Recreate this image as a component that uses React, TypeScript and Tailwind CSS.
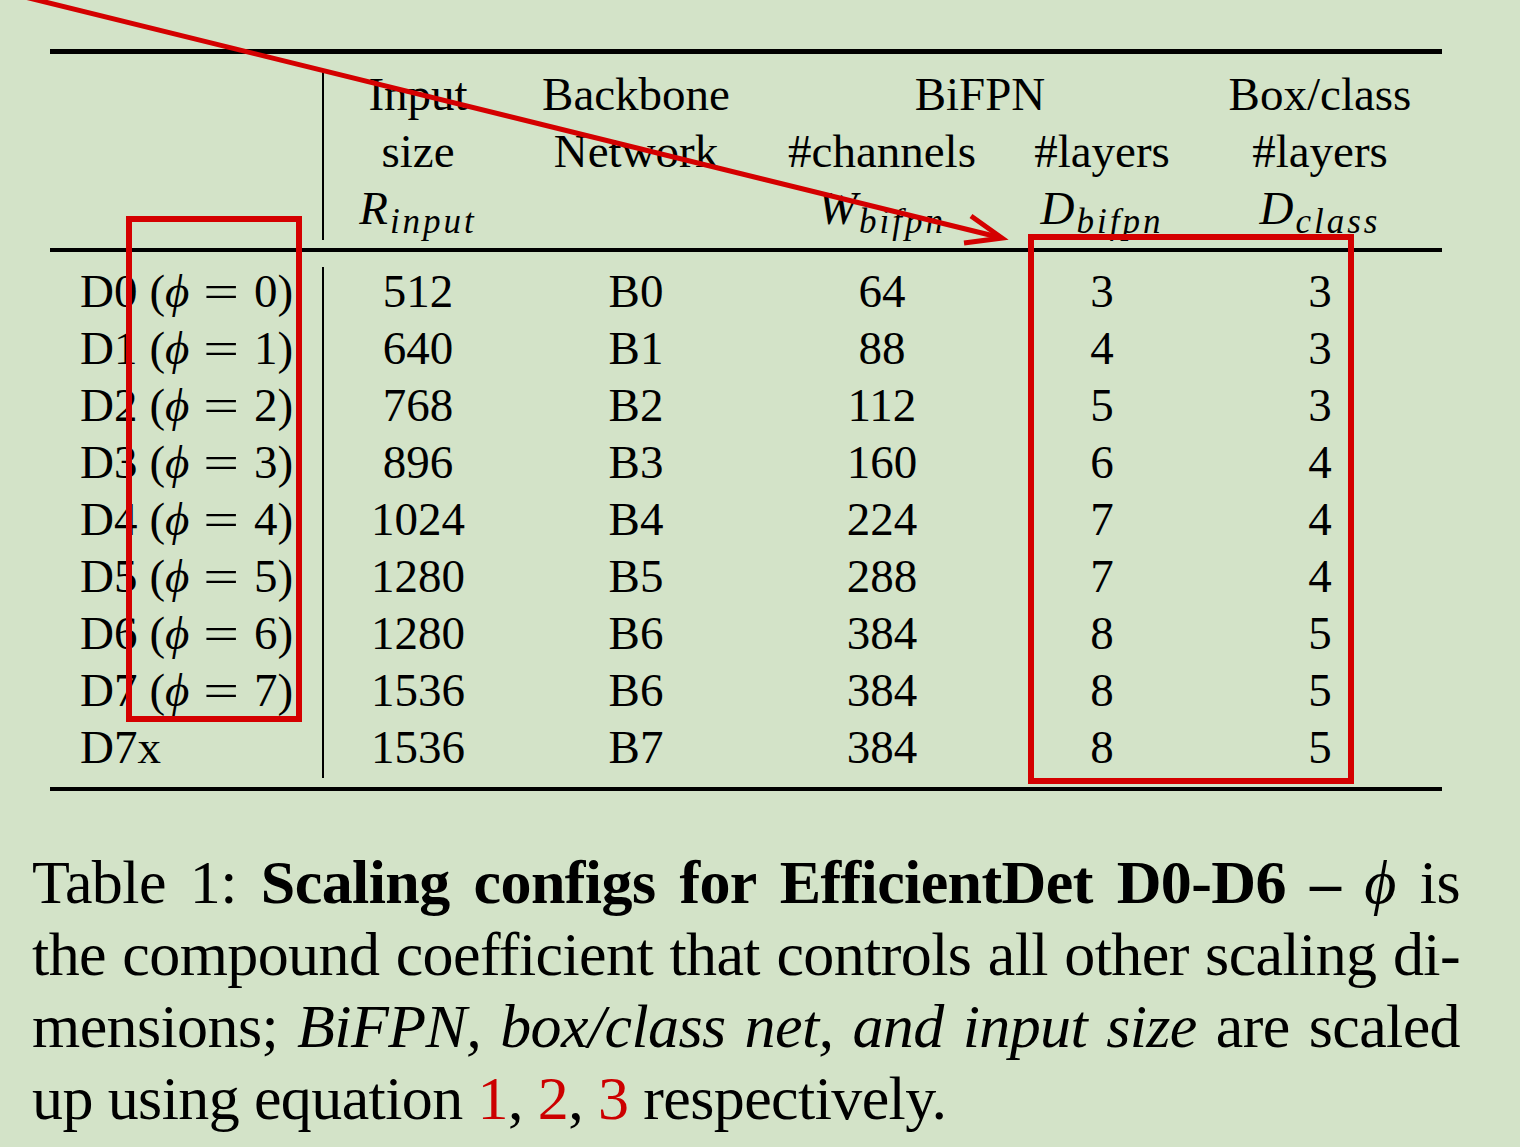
const rows = [
  { label: 'D0', phi: '0', input: '512', backbone: 'B0', ch: '64', layers: '3', box: '3' },
  { label: 'D1', phi: '1', input: '640', backbone: 'B1', ch: '88', layers: '4', box: '3' },
  { label: 'D2', phi: '2', input: '768', backbone: 'B2', ch: '112', layers: '5', box: '3' },
  { label: 'D3', phi: '3', input: '896', backbone: 'B3', ch: '160', layers: '6', box: '4' },
  { label: 'D4', phi: '4', input: '1024', backbone: 'B4', ch: '224', layers: '7', box: '4' },
  { label: 'D5', phi: '5', input: '1280', backbone: 'B5', ch: '288', layers: '7', box: '4' },
  { label: 'D6', phi: '6', input: '1280', backbone: 'B6', ch: '384', layers: '8', box: '5' },
  { label: 'D7', phi: '7', input: '1536', backbone: 'B6', ch: '384', layers: '8', box: '5' },
  { label: 'D7x', phi: '', input: '1536', backbone: 'B7', ch: '384', layers: '8', box: '5' },
]

// math symbol with a subscript, e.g. R_input
function Sym({ main, sub }: { main: string; sub: string }) {
  return (
    <span className="italic">
      {main}
      <span className="relative top-[9px] ml-[2px] text-[35px] leading-none tracking-[3px]">{sub}</span>
    </span>
  )
}

function RowLabel({ label, phi }: { label: string; phi: string }) {
  return (
    <div className="flex items-baseline whitespace-pre">
      <span>{label}</span>
      {phi && (
        <>
          <span className="ml-[12px]">(</span>
          <span className="italic">ϕ</span>
          <span className="mx-[19px] inline-block scale-x-[1.35]">=</span>
          <span>{phi})</span>
        </>
      )}
    </div>
  )
}

export default function App() {
  return (
    <div className="relative min-h-[1147px] w-[1520px] overflow-hidden bg-[#d3e3c8] font-[family-name:'Liberation_Serif','Times_New_Roman',serif] text-black">
      {/* Table */}
      <div className="pt-[49px] pl-[50px]">
        <div className="w-[1392px]">
          <div className="h-[5px] bg-black" />

          {/* Header */}
          <div className="flex pt-[12px] pb-[11px] text-[47px] leading-[57px]">
            <div className="w-[272px] shrink-0" />
            <div className="w-[2px] shrink-0 bg-black mt-[6px] -mb-[3px]" />
            <div className="grid grid-cols-[188px_248px_244px_196px_240px] text-center">
              <div>Input</div>
              <div>Backbone</div>
              <div className="col-span-2">BiFPN</div>
              <div>Box/class</div>
              <div>size</div>
              <div>Network</div>
              <div>#channels</div>
              <div>#layers</div>
              <div>#layers</div>
              <div className="h-[57px]"><Sym main="R" sub="input" /></div>
              <div />
              <div className="h-[57px]"><Sym main="W" sub="bifpn" /></div>
              <div className="h-[57px]"><Sym main="D" sub="bifpn" /></div>
              <div className="h-[57px]"><Sym main="D" sub="class" /></div>
            </div>
          </div>
          <div className="h-[4px] bg-black" />

          {/* Body */}
          <div className="flex pt-[11px] pb-[11px] text-[47px] leading-[57px]">
            <div className="w-[272px] shrink-0 pl-[30px]">
              {rows.map((r) => (
                <RowLabel key={r.label} label={r.label} phi={r.phi} />
              ))}
            </div>
            <div className="w-[2px] shrink-0 bg-black mt-[4px] -mb-[2px]" />
            <div className="grid grid-cols-[188px_248px_244px_196px_240px] text-center">
              {rows.map((r) => (
                <div key={r.label} className="contents">
                  <div>{r.input}</div>
                  <div>{r.backbone}</div>
                  <div>{r.ch}</div>
                  <div>{r.layers}</div>
                  <div>{r.box}</div>
                </div>
              ))}
            </div>
          </div>
          <div className="h-[4px] bg-black" />
        </div>
      </div>

      {/* Caption */}
      <div className="pt-[55px] pl-[32px] w-[1460px] text-[62px] leading-[72px] tracking-[-0.6px]">
        <div className="text-justify [text-align-last:justify]">
          Table 1: <b>Scaling configs for EfficientDet D0-D6 –</b> <i>ϕ</i> is
        </div>
        <div className="text-justify [text-align-last:justify]">
          the compound coefficient that controls all other scaling di-
        </div>
        <div className="text-justify [text-align-last:justify]">
          mensions; <i>BiFPN, box/class net, and input size</i> are scaled
        </div>
        <div>
          up using equation <span className="text-[#cc0000]">1</span>,{' '}
          <span className="text-[#cc0000]">2</span>, <span className="text-[#cc0000]">3</span> respectively.
        </div>
      </div>

      {/* Red annotations */}
      <svg
        className="pointer-events-none absolute left-0 top-0"
        width={1520}
        height={1147}
        viewBox="0 0 1520 1147"
      >
        <line x1={-10} y1={-11.6} x2={999} y2={237.3} stroke="#d40000" strokeWidth={5} />
        <polyline
          points="971,216 1002,238 964,243"
          fill="none"
          stroke="#d40000"
          strokeWidth={5}
          strokeLinejoin="miter"
        />
        <rect x={129} y={219} width={170} height={500} fill="none" stroke="#d40000" strokeWidth={6} />
        <rect x={1031} y={237} width={320} height={544} fill="none" stroke="#d40000" strokeWidth={6} />
      </svg>
    </div>
  )
}
